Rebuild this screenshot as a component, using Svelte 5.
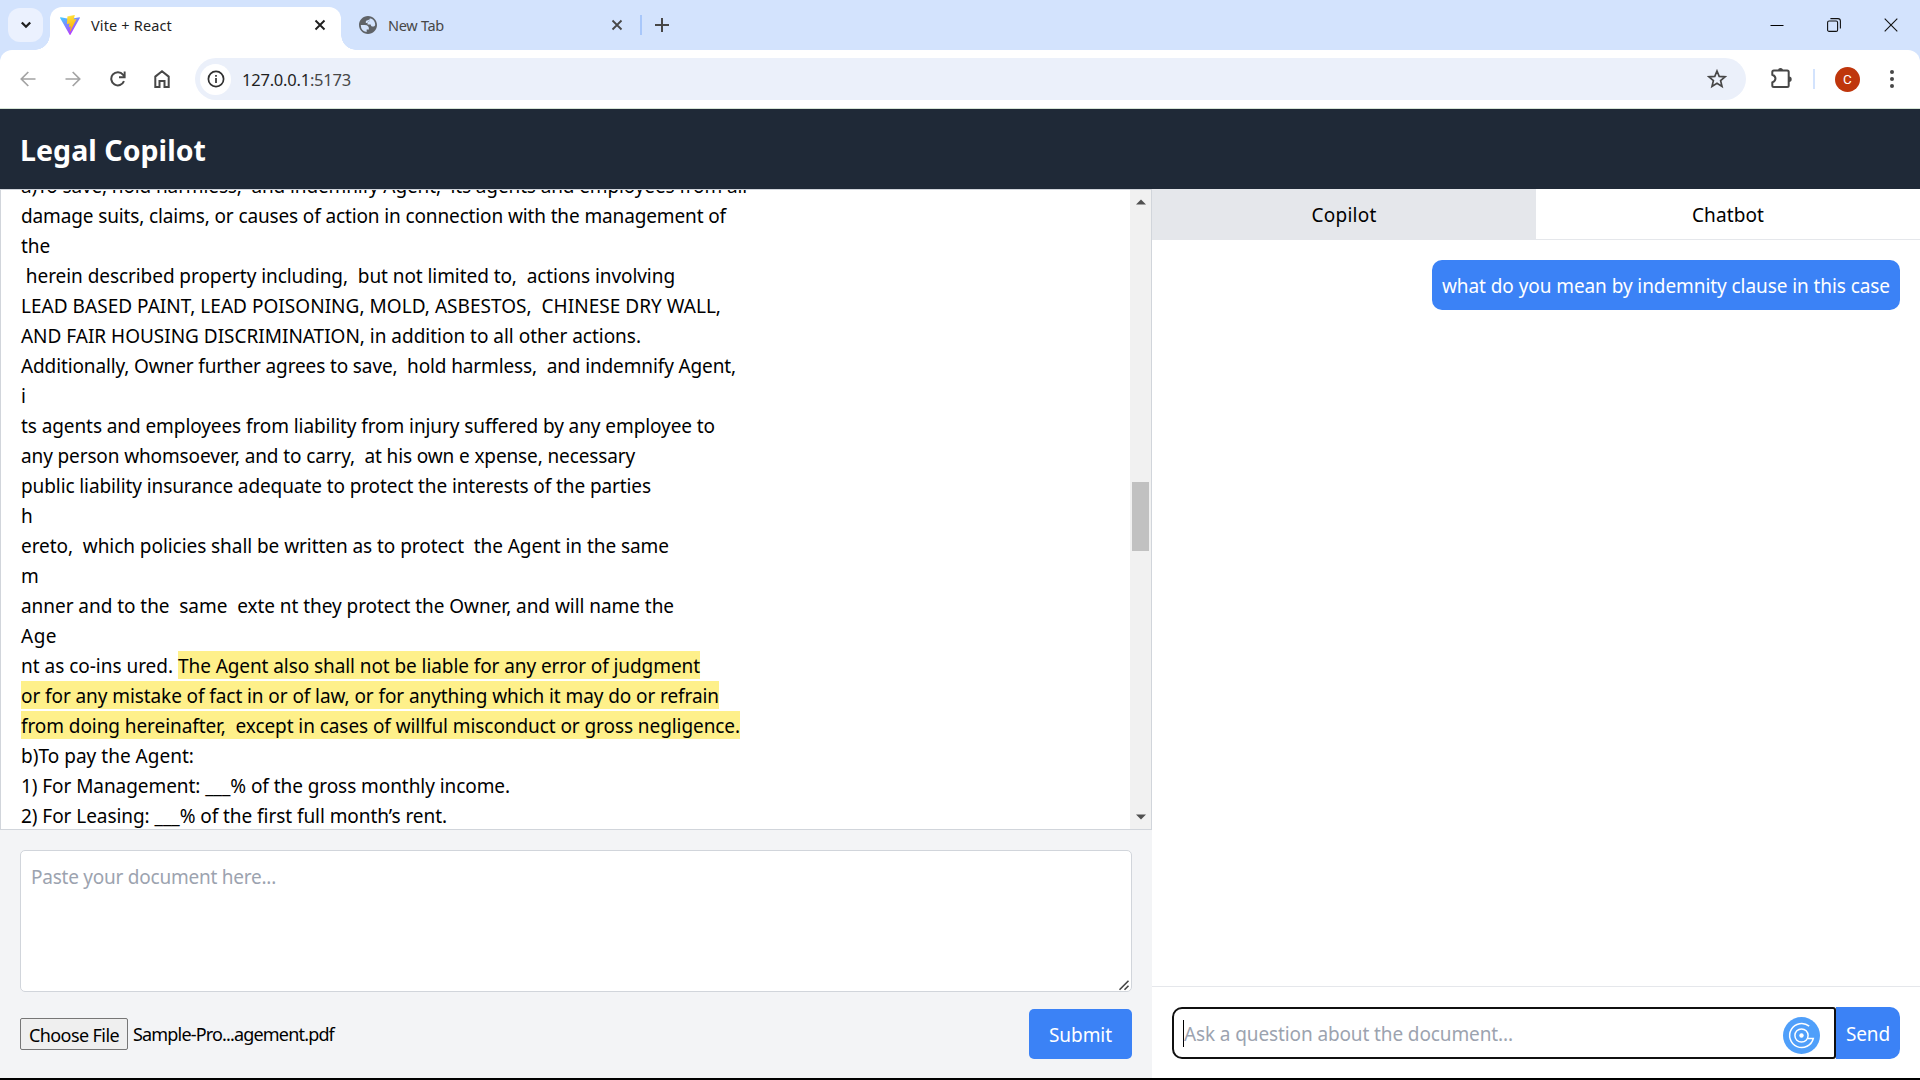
<script>
  // Spreads a line of text so that it fills the given width in pixels.
  function fit(node, width) {
    const apply = () => {
      node.style.letterSpacing = '0px';
      const count = node.textContent.length;
      const natural = node.getBoundingClientRect().width;
      node.style.letterSpacing = `${(width - natural) / count}px`;
    };
    apply();
    document.fonts?.ready.then(apply);
  }

  const lines = [
    ['a)To save, hold harmless,  and indemnify Agent,  its agents and employees from all', 726],
    ['damage suits, claims, or causes of action in connection with the management of', 705],
    ['the', 29],
    [' herein described property including,  but not limited to,  actions involving', 654],
    ['LEAD BASED PAINT, LEAD POISONING, MOLD, ASBESTOS,  CHINESE DRY WALL,', 700],
    ['AND FAIR HOUSING DISCRIMINATION, in addition to all other actions.', 620],
    ['Additionally, Owner further agrees to save,  hold harmless,  and indemnify Agent,', 715],
    ['i', 5],
    ['ts agents and employees from liability from injury suffered by any employee to', 694],
    ['any person whomsoever, and to carry,  at his own e xpense, necessary', 614],
    ['public liability insurance adequate to protect the interests of the parties', 630],
    ['h', 11],
    ['ereto,  which policies shall be written as to protect  the Agent in the same', 648],
    ['m', 17],
    ['anner and to the  same  exte nt they protect the Owner, and will name the', 653],
    ['Age', 36],
    ['nt as co-ins ured. ', 157, 'The Agent also shall not be liable for any error of judgment', 522],
    ['', 0, 'or for any mistake of fact in or of law, or for anything which it may do or refrain', 698],
    ['', 0, 'from doing hereinafter,  except in cases of willful misconduct or gross negligence.', 719],
    ['b)To pay the Agent:', 173],
    ['1) For Management: ___% of the gross monthly income.', 489],
    ['2) For Leasing: ___% of the first full month’s rent.', 426],
  ];
</script>

<div class="screen">
  <div class="tabstrip">
    <div class="search"><svg width="12" height="12" viewBox="0 0 12 12"><path d="M1.800 3.500 6 7.700l4.200-4.200" fill="none" stroke="#1f1f1f" stroke-width="2.300" /></svg></div>
    <div class="tab active">
      <svg width="20" height="20" viewBox="0 0 256 257">
        <defs>
          <linearGradient id="vg" x1="0" x2=".6" y1="0" y2="1"><stop offset="0" stop-color="#41d1ff" /><stop offset="1" stop-color="#bd34fe" /></linearGradient>
          <linearGradient id="vb" x1=".4" x2=".6" y1="0" y2="1"><stop offset="0" stop-color="#ffea83" /><stop offset=".1" stop-color="#ffdd35" /><stop offset="1" stop-color="#ffa800" /></linearGradient>
        </defs>
        <path fill="url(#vg)" d="M255 38 134 253c-2 4-8 4-11 0L1 38c-3-5 1-11 7-10l120 22 120-22c6-1 10 5 7 10Z" />
        <path fill="url(#vb)" d="M185 0 97 17c-2 0-3 1-3 3l-5 92c0 2 2 4 4 3l25-5c2-1 4 1 4 4l-8 36c0 2 2 4 4 4l15-5c3-1 5 1 4 4l-11 56c-1 4 3 5 5 2l78-154c1-2-1-4-3-4l-26 5c-2 0-4-2-3-4L189 4c1-2-1-4-4-4Z" />
      </svg>
      <span class="tabname"><span class="fit" use:fit={81}>Vite + React</span></span>
      <svg class="close" width="12" height="12" viewBox="0 0 12 12"><path d="m1.500 1.500 9 9m0-9-9 9" stroke="#1f1f1f" stroke-width="1.900" /></svg>
    </div>
    <div class="tab second">
      <svg width="18" height="18" viewBox="2 2 20 20"><path fill="#5f6368" d="M12 2C6.480 2 2 6.480 2 12s4.480 10 10 10 10-4.480 10-10S17.520 2 12 2zM4 12h4.400c3.400.02 4.900 1.730 4.600 5.130h-2.500v2.720A7.990 7.990 0 0 1 4 12zm10.600-7.570A8 8 0 0 1 20 12c-.5 1.200-1.300 1.800-2.500 1.800-1.600 0-2.500-.9-2.500-2.300h-3.500c-.2-2.600.7-4 2.600-4 0-1.300.2-2.200.5-3.070z" transform="translate(0 0)" /><path d="M13.800 4.200c-.1 1.600-.8 2.300-2.300 2.400-1.700.2-2.400 1.500-1.800 3.100h1.800c.3-1.500 1.100-2.200 2.600-2.200z" fill="#d3e3fd" /></svg>
      <span class="tabname"><span class="fit" use:fit={56}>New Tab</span></span>
      <svg class="close" width="12" height="12" viewBox="0 0 12 12"><path d="m1.500 1.500 9 9m0-9-9 9" stroke="#474747" stroke-width="1.800" /></svg>
    </div>
    <i class="sep"></i>
    <svg class="plus" width="14" height="14" viewBox="0 0 14 14"><path d="M7 0v14M0 7h14" stroke="#474747" stroke-width="2" /></svg>
    <div class="winctl">
      <svg width="14" height="14" viewBox="0 0 14 14"><path d="M.5 7.500h13" stroke="#000" /></svg>
      <svg width="14" height="14" viewBox="0 0 14 14"><rect x=".6" y="3" width="10" height="10.400" rx="1.500" fill="none" stroke="#111" stroke-width="1.100" /><path d="M3.400.6H11a2.400 2.400 0 0 1 2.400 2.400v7.600" fill="none" stroke="#111" stroke-width="1.100" /></svg>
      <svg width="14" height="14" viewBox="0 0 14 14"><path d="m.7.7 12.600 12.600m0-12.600L.7 13.300" stroke="#111" stroke-width="1.100" /></svg>
    </div>
  </div>

  <div class="toolbarwrap">
    <div class="toolbar">
      <svg class="back" width="16" height="16" viewBox="0 0 16 16"><path d="M15.500 8H1.500M8.300 1 1.300 8l7 7" fill="none" stroke="#a3a3a3" stroke-width="1.700" /></svg>
      <svg class="fwd" width="16" height="16" viewBox="0 0 16 16"><path d="M.5 8h14M7.700 1l7 7-7 7" fill="none" stroke="#a3a3a3" stroke-width="1.700" /></svg>
      <svg class="reload" width="16" height="16" viewBox="0 0 16 16"><path d="M14 10.200A6.600 6.600 0 1 1 13 3.600l1.500 2" fill="none" stroke="#474747" stroke-width="2" /><path d="M15.600.5v6.700H9V5.300h4.700V.5Z" fill="#474747" /></svg>
      <svg class="home" width="16" height="18" viewBox="0 0 16 18"><path d="M1.300 16.900V6.600L8 1.300l6.700 5.300v10.300h-4.200v-6h-5v6Z" fill="none" stroke="#474747" stroke-width="2" /></svg>
      <div class="omnibox">
        <div class="info"><svg width="18" height="18" viewBox="0 0 18 18"><circle cx="9" cy="9" r="7.600" fill="none" stroke="#303030" stroke-width="1.700" /><path d="M9 8v5M9 5v1.700" stroke="#303030" stroke-width="1.700" /></svg></div>
        <span class="url"><span class="fit" use:fit={109}><b>127.0.0.1</b>:5173</span></span>
        <svg class="star" width="20" height="20" viewBox="0 0 20 20"><path d="m10 2 2.200 5.400 5.900.4-4.500 3.800 1.400 5.800-5-3.200-5 3.200 1.400-5.800L1.900 7.800l5.900-.4Z" fill="none" stroke="#474747" stroke-width="1.700" /></svg>
      </div>
      <svg class="ext" width="22" height="21" viewBox="0 0 22 21"><path d="M2.800 2.500h13.400q1.500 0 1.500 1.500v13.600q0 1.500-1.500 1.500H2.800q-1.500 0-1.500-1.500v-3.200c4.200-1.800 4.200-6 0-7.600V4q0-1.500 1.500-1.500Z" fill="none" stroke="#474747" stroke-width="2" /><path d="M7 2.500a2.500 2.500 0 0 1 5 0ZM18 8.500a2.700 2.700 0 0 1 0 5.400Z" fill="#474747" /></svg>
      <i class="sep2"></i>
      <div class="avatar">C</div>
      <svg class="dots" width="4" height="18" viewBox="0 0 4 18"><g fill="#474747"><circle cx="2" cy="2" r="2" /><circle cx="2" cy="9" r="2" /><circle cx="2" cy="16" r="2" /></g></svg>
    </div>
  </div>

  <header><h1><span class="fit" use:fit={186}>Legal Copilot</span></h1></header>

  <main>
    <section class="left">
      <div class="doc">
        <div class="text">
          {#each lines as [plain, width, marked, markedWidth]}
            <div class="line">{#if plain}<span class="fit" use:fit={width}>{plain}</span>{/if}{#if marked}<mark><span class="fit" use:fit={markedWidth}>{marked}</span></mark>{/if}</div>
          {/each}
        </div>
        <div class="scrollbar">
          <svg width="10" height="6" viewBox="0 0 10 6"><path d="M0 5.500 5 .5l5 5Z" fill="#505050" /></svg>
          <div class="thumb"></div>
          <svg class="down" width="10" height="6" viewBox="0 0 10 6"><path d="M0 .5l5 5 5-5Z" fill="#505050" /></svg>
        </div>
      </div>
      <div class="upload">
        <div class="paste">
          <span class="fit" use:fit={245}>Paste your document here...</span>
          <svg width="12" height="12" viewBox="0 0 12 12"><path d="m1.500 10.800 9-9M6.500 10.800l4-4" stroke="#444" stroke-width="1.600" /></svg>
        </div>
        <div class="actions">
          <div class="choose"><span class="fit" use:fit={90}>Choose File</span></div>
          <div class="filename"><span class="fit" use:fit={201}>Sample-Pro...agement.pdf</span></div>
          <div class="submit"><span class="fit" use:fit={63}>Submit</span></div>
        </div>
      </div>
    </section>

    <section class="right">
      <div class="tabs">
        <div class="ptab on"><span class="fit" use:fit={65}>Copilot</span></div>
        <div class="ptab"><span class="fit" use:fit={72}>Chatbot</span></div>
      </div>
      <div class="chat">
        <div class="bubble"><span class="fit" use:fit={448}>what do you mean by indemnity clause in this case</span></div>
      </div>
      <div class="ask">
        <div class="input">
          <i class="caret"></i>
          <span class="fit" use:fit={329}>Ask a question about the document...</span>
          <svg width="37" height="37" viewBox="0 0 37 37"><circle cx="18.500" cy="18.500" r="18.500" fill="#4f9ffa" /><g fill="none" stroke="#fff" stroke-width="1.500"><path d="M26.200 9.200A12 12 0 1 0 30.300 21.500H24.500" /><circle cx="18.500" cy="18.500" r="6.600" /></g><circle cx="18.500" cy="18.500" r="2.200" fill="#fff" /></svg>
        </div>
        <div class="send"><span class="fit" use:fit={44}>Send</span></div>
      </div>
    </section>
  </main>
  <div class="edge"></div>
</div>

<style>
  :global(body) { margin: 0; background: #fff; overflow: hidden; }
  .screen { box-sizing: border-box; width: 1920px; height: 1080px; display: flex; flex-direction: column; overflow: hidden; font-family: "Noto Sans", "Open Sans", sans-serif; font-size: 19px; line-height: 30px; color: #000; }
  .screen * { box-sizing: border-box; }
  svg { display: block; flex: none; }
  .fit { white-space: pre; }

  .tabstrip { height: 50px; flex: none; background: #d3e3fd; display: flex; align-items: center; padding-left: 8px; font-size: 14.500px; }
  .search { width: 35px; height: 34px; border-radius: 12px; background: #ebf1fe; display: grid; place-items: center; margin-right: 7px; }
  .tab { height: 43px; margin-top: 7px; display: flex; align-items: center; padding-bottom: 7px; }
  .active { position: relative; width: 291px; background: #fff; border-radius: 12px 12px 0 0; padding-left: 10px; padding-right: 15px; color: #1f1f1f; }
  .active::before, .active::after { content: ""; position: absolute; bottom: 0; width: 15px; height: 15px; }
  .active::before { left: -15px; background: radial-gradient(circle at 0 0, transparent 14.500px, #fff 15px); }
  .active::after { right: -15px; background: radial-gradient(circle at 100% 0, transparent 14.500px, #fff 15px); }
  .tabname { margin-left: 10px; line-height: 20px; }
  .active .tabname { margin-left: 11px; }
  .close { margin-left: auto; }
  .second { width: 264px; margin-left: 18px; color: #474747; }
  .second .tabname { margin-left: 11px; }
  .sep { width: 2px; height: 20px; background: #a8c7fa; margin-left: 17px; }
  .plus { margin-left: 13px; }
  .winctl { margin-left: auto; display: flex; gap: 43px; padding-right: 22px; }

  .toolbarwrap { background: #d3e3fd; flex: none; }
  .toolbar { height: 59px; background: #fff; border-radius: 12px 12px 0 0; border-bottom: 1px solid #d5e3d5; display: flex; align-items: center; padding: 0 26px 0 20px; }
  .fwd { margin-left: 29px; }
  .reload { margin-left: 29px; }
  .home { margin-left: 28px; }
  .omnibox { width: 1551px; height: 42px; margin-left: 25px; border-radius: 21px; background: #ebf0fa; display: flex; align-items: center; padding: 0 19px 0 5px; }
  .info { width: 31px; height: 31px; border-radius: 50%; background: #fff; display: grid; place-items: center; }
  .url { margin-left: 11px; font-size: 16.500px; color: #474747; padding-top: 1px; }
  .url b { font-weight: 400; color: #1f1f1f; }
  .star { margin-left: auto; }
  .ext { margin-left: 25px; margin-top: -1px; }
  .sep2 { width: 2px; height: 20px; background: #d3e3fd; margin-left: 20px; }
  .avatar { width: 25px; height: 25px; border-radius: 50%; background: #bf360c; color: #fff; margin-left: 20px; text-align: center; font: 13.500px/25px Roboto, sans-serif; }
  .dots { margin-left: auto; }

  header { height: 80px; flex: none; background: #1f2937; color: #fff; padding: 21px 20px; }
  h1 { margin: 0; font-size: 28.500px; line-height: 40px; font-weight: 700; }

  main { height: 889px; flex: none; display: flex; }
  .left { width: 1152px; display: flex; flex-direction: column; background: #f3f4f6; }
  .doc { height: 641px; border: 1px solid #d1d5db; background: #fff; display: flex; overflow: hidden; }
  .text { flex: 1; margin-top: -19px; padding-left: 20px; }
  .line { height: 30px; white-space: pre; }
  mark { background: #fef08a; color: inherit; padding: 2px 0 0; }
  .scrollbar { width: 21px; background: #f1f1f1; display: flex; flex-direction: column; align-items: center; padding-top: 9px; padding-bottom: 9px; }
  .thumb { width: 17px; height: 69px; background: #c1c1c1; margin-top: 277px; }
  .down { margin-top: auto; }
  .upload { flex: 1; padding: 20px 20px 0; }
  .paste { position: relative; height: 142px; background: #fff; border: 1px solid #d1d5db; border-radius: 5px; padding: 11px 10px; color: #9ca3af; }
  .paste svg { position: absolute; right: 1px; bottom: 0; }
  .actions { display: flex; align-items: center; margin-top: 17px; height: 50px; }
  .choose { width: 108px; height: 32px; border: 1px solid #767676; border-radius: 2px; background: #efefef; padding-left: 8px; font-size: 18px; line-height: 33px; }
  .filename { margin-left: 5px; font-size: 18px; }
  .submit { margin-left: auto; width: 103px; height: 50px; border-radius: 5px; background: #3b82f6; color: #fff; text-align: center; line-height: 53px; }

  .right { flex: 1; display: flex; flex-direction: column; background: #fff; }
  .tabs { height: 51px; display: flex; border-bottom: 1px solid #e5e7eb; }
  .ptab { flex: 1; text-align: center; line-height: 52px; }
  .on { background: #e5e7eb; }
  .chat { flex: 1; padding: 20px; display: flex; align-items: flex-start; justify-content: flex-end; }
  .bubble { width: 468px; height: 50px; border-radius: 10px; background: #3b82f6; color: #fff; padding-left: 10px; line-height: 53px; }
  .ask { height: 92px; border-top: 1px solid #e5e7eb; padding: 20px; display: flex; }
  .input { width: 664px; height: 52px; border: 2px solid #101010; border-radius: 10px 3px 3px 10px; display: flex; align-items: center; padding: 0 14px 0 9px; color: #9ca3af; }
  .input .fit { padding-top: 2px; }
  .input svg { margin-left: auto; margin-top: 5px; }
  .caret { width: 1px; height: 27px; background: #000; }
  .send { width: 64px; height: 52px; border-radius: 0 10px 10px 0; background: #3b82f6; color: #fff; text-align: center; line-height: 54px; }
  .edge { flex: 1; background: #000; }
</style>
